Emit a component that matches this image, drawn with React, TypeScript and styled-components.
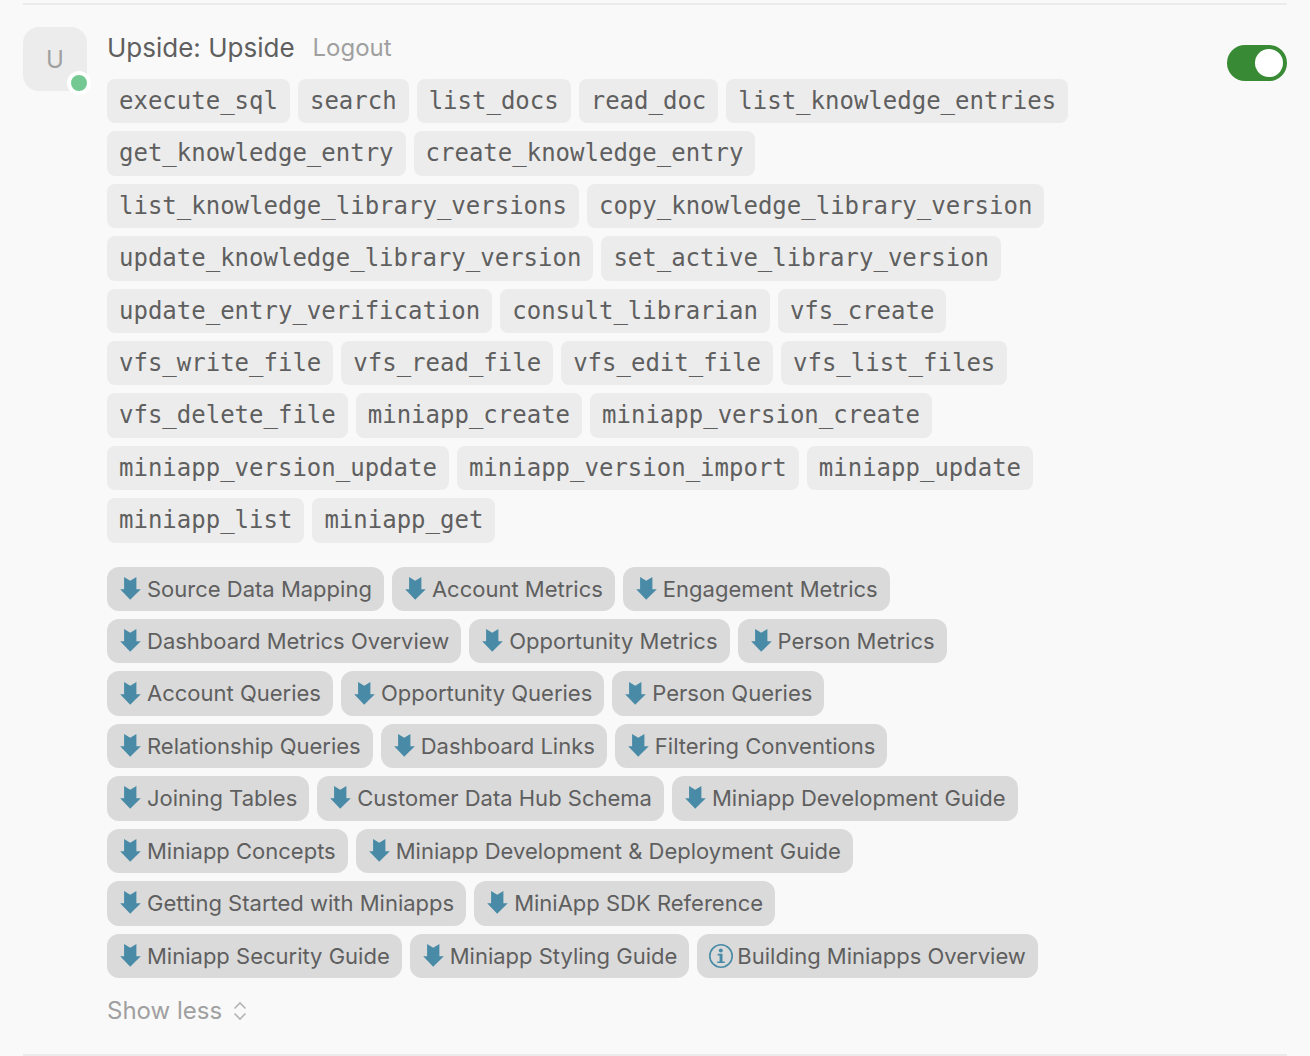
import React, { useId, useState } from "react";
import styled, { createGlobalStyle } from "styled-components";

const GlobalStyle = createGlobalStyle`
  *, *::before, *::after { box-sizing: border-box; }
  body {
    margin: 0;
    background: #f9f9f9;
    color: #5f5f5f;
    font-family: Inter, "Liberation Sans", sans-serif;
  }
`;

const Panel = styled.main`
  padding: 3px 23px 0;
`;

const Server = styled.section`
  display: flex;
  align-items: flex-start;
  gap: 20px;
  padding: 22px 0 29px;
  border-top: 2px solid #ebebeb;
  border-bottom: 2px solid #ebebeb;
`;

const Avatar = styled.div`
  position: relative;
  display: grid;
  place-items: center;
  flex: none;
  width: 64px;
  height: 64px;
  border-radius: 16px;
  background: #ececec;
  color: #a0a0a0;
  font-size: 24px;
`;

const StatusDot = styled.span`
  position: absolute;
  right: -4px;
  bottom: -4px;
  width: 24px;
  height: 24px;
  border: 4px solid #fff;
  border-radius: 50%;
  background: #73c991;
`;

const Details = styled.div`
  flex: 1;
  min-width: 0;
`;

const Header = styled.header`
  display: flex;
  align-items: center;
  gap: 18px;
  margin-bottom: 10px;
  line-height: 42px;
`;

const Title = styled.h2`
  margin: 0;
  font-size: 26px;
  font-weight: 400;
`;

const TextButton = styled.button`
  display: flex;
  align-items: center;
  gap: 10px;
  padding: 0;
  border: 0;
  background: none;
  color: #a0a0a0;
  font: inherit;
  font-size: 24px;
  cursor: pointer;
`;

const ChipList = styled.ul<{ $spaceAfter: number }>`
  display: flex;
  flex-wrap: wrap;
  gap: 8px;
  margin: 0 0 ${({ $spaceAfter }) => $spaceAfter}px;
  padding: 0;
  list-style: none;
`;

const ToolChip = styled.li`
  padding: 0 12px;
  border-radius: 8px;
  background: #ececec;
  font-family: "DejaVu Sans Mono", monospace;
  font-size: 24px;
  line-height: 1.85;
`;

const ResourceChip = styled.li`
  display: flex;
  align-items: center;
  gap: 4px;
  padding: 0 12px;
  border-radius: 12px;
  background: #dadada;
  font-size: 22px;
  line-height: 2.02;
`;

const Icon = styled.svg`
  display: block;
  flex: none;
`;

const ToggleArea = styled.label`
  display: flex;
  justify-content: flex-end;
  flex: none;
  width: 195px;
  padding-top: 18px;
`;

const Toggle = styled.input`
  appearance: none;
  display: flex;
  align-items: center;
  width: 60px;
  height: 36px;
  margin: 0;
  padding: 4px;
  border-radius: 18px;
  background: #b5b5b5;
  cursor: pointer;

  &::before {
    content: "";
    width: 28px;
    height: 28px;
    border-radius: 50%;
    background: #fff;
  }

  &:checked {
    justify-content: flex-end;
    background: #388a34;
  }
`;

const tools = [
  "execute_sql", "search", "list_docs", "read_doc", "list_knowledge_entries",
  "get_knowledge_entry", "create_knowledge_entry",
  "list_knowledge_library_versions", "copy_knowledge_library_version",
  "update_knowledge_library_version", "set_active_library_version",
  "update_entry_verification", "consult_librarian", "vfs_create",
  "vfs_write_file", "vfs_read_file", "vfs_edit_file", "vfs_list_files",
  "vfs_delete_file", "miniapp_create", "miniapp_version_create",
  "miniapp_version_update", "miniapp_version_import", "miniapp_update",
  "miniapp_list", "miniapp_get",
];

type Resource = { name: string; kind: "markdown" | "info" };

const resources: Resource[] = [
  ...[
    "Source Data Mapping", "Account Metrics", "Engagement Metrics",
    "Dashboard Metrics Overview", "Opportunity Metrics", "Person Metrics",
    "Account Queries", "Opportunity Queries", "Person Queries",
    "Relationship Queries", "Dashboard Links", "Filtering Conventions",
    "Joining Tables", "Customer Data Hub Schema", "Miniapp Development Guide",
    "Miniapp Concepts", "Miniapp Development & Deployment Guide",
    "Getting Started with Miniapps", "MiniApp SDK Reference",
    "Miniapp Security Guide", "Miniapp Styling Guide",
  ].map((name): Resource => ({ name, kind: "markdown" })),
  { name: "Building Miniapps Overview", kind: "info" },
];

const ResourceIcon = ({ kind }: { kind: Resource["kind"] }) =>
  kind === "markdown" ? (
    <Icon width="24" height="24" viewBox="0 0 24 24" aria-hidden="true">
      <path fill="#498ba7" d="M5.1 0 11.2 3.8 17.4 0V12.2H21.8L11.2 22.8 1.2 12.2H5.1Z" />
    </Icon>
  ) : (
    <Icon width="24" height="24" viewBox="0 0 24 24" aria-hidden="true">
      <circle cx="12" cy="12" r="11.2" fill="none" stroke="#498ba7" strokeWidth="1.6" />
      <circle cx="11.8" cy="6.6" r="2" fill="#498ba7" />
      <path fill="#498ba7" d="M8.6 9.8H13.5V17.4H15.8V19.1H8.2V17.4H10.6V11.5H8.6Z" />
    </Icon>
  );

export default function App() {
  const [enabled, setEnabled] = useState(true);
  const toggleId = useId();

  return (
    <>
      <GlobalStyle />
      <Panel>
        <Server>
          <Avatar>
            U
            <StatusDot />
          </Avatar>
          <Details>
            <Header>
              <Title>Upside: Upside</Title>
              <TextButton type="button">Logout</TextButton>
            </Header>
            <ChipList $spaceAfter={24}>
              {tools.map((tool) => (
                <ToolChip key={tool}>{tool}</ToolChip>
              ))}
            </ChipList>
            <ChipList $spaceAfter={18}>
              {resources.map(({ name, kind }) => (
                <ResourceChip key={name}>
                  <ResourceIcon kind={kind} />
                  {name}
                </ResourceChip>
              ))}
            </ChipList>
            <TextButton type="button">
              Show less
              <Icon width="16" height="20" viewBox="0 0 16 20" aria-hidden="true">
                <path fill="none" stroke="#b4b4b4" strokeWidth="1.6" d="M2.5 7.5 8 2 13.5 7.5M2.5 12.5 8 18 13.5 12.5" />
              </Icon>
            </TextButton>
          </Details>
          <ToggleArea htmlFor={toggleId}>
            <Toggle
              id={toggleId}
              type="checkbox"
              role="switch"
              aria-label="Enable Upside"
              checked={enabled}
              onChange={(event) => setEnabled(event.target.checked)}
            />
          </ToggleArea>
        </Server>
      </Panel>
    </>
  );
}
